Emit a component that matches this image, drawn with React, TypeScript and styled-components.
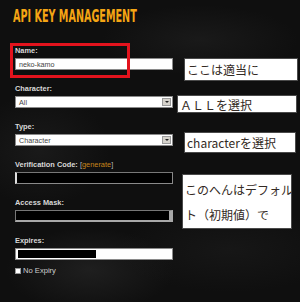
import React from "react";
import styled, { createGlobalStyle } from "styled-components";

const GlobalStyle = createGlobalStyle`
  html, body { margin: 0; padding: 0; }
  body {
    width: 300px;
    height: 302px;
    overflow: hidden;
    background: #0d0d0d;
    font-family: "Liberation Sans", Arial, sans-serif;
  }
`;

const Page = styled.div`
  position: relative;
  width: 300px;
  height: 302px;
  box-sizing: border-box;
  padding: 8px 0 0 13px;
  overflow: hidden;
  background:
    radial-gradient(ellipse 120px 60px at 90px 270px, rgba(60,60,60,0.35), transparent 70%),
    radial-gradient(ellipse 140px 50px at 200px 40px, rgba(50,50,50,0.3), transparent 70%),
    radial-gradient(ellipse 100px 80px at 40px 150px, rgba(45,45,45,0.35), transparent 70%),
    radial-gradient(ellipse 160px 60px at 230px 250px, rgba(40,40,40,0.3), transparent 70%),
    #0f0f0f;
`;

const Title = styled.h1`
  margin: 0;
  height: 16px;
  font-family: "DejaVu Sans Condensed", "Liberation Sans Narrow", sans-serif;
  font-weight: 700;
  font-size: 17px;
  line-height: 16px;
  color: #f5a514;
  white-space: nowrap;
  transform: scaleX(0.63);
  transform-origin: left center;
`;

const Form = styled.div`
  display: flex;
  flex-direction: column;
  margin: 23px 0 0 2px;
`;

const Field = styled.div<{ $last?: boolean }>`
  display: flex;
  flex-direction: column;
  margin-bottom: ${(p) => (p.$last ? 7 : 15)}px;
`;

const Label = styled.div`
  font-size: 7.4px;
  font-weight: 700;
  line-height: 8px;
  color: #d8d8d8;
  margin-bottom: 3px;
  white-space: nowrap;
`;

const Link = styled.span`
  font-weight: 400;
  color: #c8851a;
`;

const Bracket = styled.span`
  font-weight: 400;
  color: #bbb;
`;

const Box = styled.div<{ $dark?: boolean }>`
  position: relative;
  box-sizing: border-box;
  width: 158px;
  height: 12px;
  display: flex;
  align-items: center;
  padding-left: 3px;
  background: ${(p) => (p.$dark ? "#000" : "#fff")};
  border: 1px solid #8a8a8a;
  font-size: 7.2px;
  color: #444;
`;

const CodeBox = styled(Box)`
  border-left: 2px solid #e0e0e0;
  border-top-color: #777;
`;

const MaskBox = styled(Box)`
  border-color: #777;
  border-right: 4px solid #a8a8a8;
  border-bottom: 2px solid #a8a8a8;
`;

const DateBox = styled(Box)`
  padding-left: 2px;
`;

const DateFill = styled.div`
  width: 78px;
  height: 8px;
  background: #000;
`;

const DropButton = styled.div`
  position: absolute;
  right: 1px;
  top: 1px;
  width: 9px;
  height: 8px;
  box-sizing: border-box;
  background: #d6d3cc;
  border: 1px solid #9a9a9a;
  display: flex;
  align-items: center;
  justify-content: center;
  &::after {
    content: "";
    border-left: 2px solid transparent;
    border-right: 2px solid transparent;
    border-top: 2px solid #222;
  }
`;

const CheckRow = styled.div`
  display: flex;
  align-items: center;
  gap: 2px;
  font-size: 7.6px;
  color: #cfcfcf;
  line-height: 7px;
`;

const CheckBox = styled.div`
  width: 6px;
  height: 6px;
  background: #fff;
  border: 0.5px solid #999;
  box-sizing: border-box;
`;

const Highlight = styled.div`
  position: absolute;
  left: 10px;
  top: 43px;
  width: 120px;
  height: 35px;
  box-sizing: border-box;
  border: 3px solid #e3131d;
`;

const Note = styled.div<{ $x: number; $y: number; $w: number; $h: number }>`
  position: absolute;
  left: ${(p) => p.$x}px;
  top: ${(p) => p.$y}px;
  width: ${(p) => p.$w}px;
  height: ${(p) => p.$h}px;
  box-sizing: border-box;
  background: #fff;
  border: 1px solid #4a4a4a;
  padding: 0 0 0 2px;
  display: flex;
  flex-direction: column;
  justify-content: center;
  overflow: hidden;
  font-family: "Noto Sans CJK JP", "Noto Sans", sans-serif;
  font-size: 12px;
  color: #332a24;
  white-space: nowrap;
`;

const NoteLine = styled.div`
  line-height: 25px;
`;

export default function App() {
  return (
    <>
      <GlobalStyle />
      <Page>
        <Title>API KEY MANAGEMENT</Title>
        <Form>
          <Field>
            <Label>Name:</Label>
            <Box>neko-kamo</Box>
          </Field>
          <Field>
            <Label>Character:</Label>
            <Box>
              All
              <DropButton />
            </Box>
          </Field>
          <Field>
            <Label>Type:</Label>
            <Box>
              Character
              <DropButton />
            </Box>
          </Field>
          <Field>
            <Label>
              Verification Code: <Bracket>[</Bracket>
              <Link>generate</Link>
              <Bracket>]</Bracket>
            </Label>
            <CodeBox $dark />
          </Field>
          <Field>
            <Label>Access Mask:</Label>
            <MaskBox $dark />
          </Field>
          <Field $last>
            <Label>Expires:</Label>
            <DateBox>
              <DateFill />
            </DateBox>
          </Field>
          <CheckRow>
            <CheckBox />
            No Expiry
          </CheckRow>
        </Form>
        <Highlight />
        <Note $x={184} $y={58} $w={114} $h={23}>ここは適当に</Note>
        <Note $x={177} $y={95} $w={120} $h={18}>ＡＬＬを選択</Note>
        <Note $x={184} $y={132} $w={112} $h={21}>characterを選択</Note>
        <Note $x={182} $y={174} $w={110} $h={55}>
          <NoteLine>このへんはデフォル</NoteLine>
          <NoteLine>ト（初期値）で</NoteLine>
        </Note>
      </Page>
    </>
  );
}
